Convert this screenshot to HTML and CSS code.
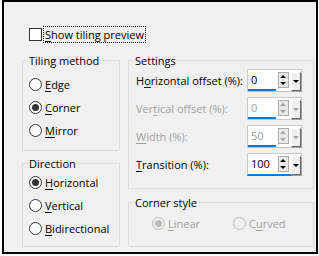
FILE: index.html
```html
<!DOCTYPE html>
<html>
<head>
<meta charset="utf-8">
<link rel="stylesheet" href="styles.css">
</head>
<body>
<div class="frame">
  <div class="check-row">
    <span class="checkbox"></span>
    <span class="focus"><u>S</u>how tiling preview</span>
  </div>
  <div class="cols">
    <div class="col left">
      <div class="group tiling">
        <span class="group-title">Tiling method</span>
        <div class="radio"><span class="circle"></span><span><u>E</u>dge</span></div>
        <div class="radio"><span class="circle on"></span><span><u>C</u>orner</span></div>
        <div class="radio"><span class="circle"></span><span><u>M</u>irror</span></div>
      </div>
      <div class="group direction">
        <span class="group-title">Direction</span>
        <div class="radio"><span class="circle on"></span><span><u>H</u>orizontal</span></div>
        <div class="radio"><span class="circle"></span><span><u>V</u>ertical</span></div>
        <div class="radio"><span class="circle"></span><span><u>B</u>idirectional</span></div>
      </div>
    </div>
    <div class="col right">
      <div class="group settings">
        <span class="group-title">Settings</span>
        <div class="row">
          <span class="lbl">H<u>o</u>rizontal offset (%):</span>
          <div class="spin"><span class="val">0</span><span class="updown"><i class="up"></i><i class="dn"></i></span><span class="drop"><i class="dn"></i></span></div>
        </div>
        <div class="row dis">
          <span class="lbl">Ver<u>t</u>ical offset (%):</span>
          <div class="spin"><span class="val">0</span><span class="updown"><i class="up"></i><i class="dn"></i></span><span class="drop"><i class="dn"></i></span></div>
        </div>
        <div class="row dis">
          <span class="lbl"><u>W</u>idth (%):</span>
          <div class="spin"><span class="val">50</span><span class="updown"><i class="up"></i><i class="dn"></i></span><span class="drop"><i class="dn"></i></span></div>
        </div>
        <div class="row">
          <span class="lbl"><u>T</u>ransition (%):</span>
          <div class="spin full"><span class="val">100</span><span class="updown"><i class="up"></i><i class="dn"></i></span><span class="drop"><i class="dn"></i></span></div>
        </div>
      </div>
      <div class="group corner">
        <span class="group-title">Corner style</span>
        <div class="radio-line">
          <div class="radio dis"><span class="circle on"></span><span><u>L</u>inear</span></div>
          <div class="radio dis"><span class="circle"></span><span>C<u>u</u>rved</span></div>
        </div>
      </div>
    </div>
  </div>
</div>
</body>
</html>
```
FILE: styles.css
```css
html, body {
  margin: 0;
  padding: 0;
  background: #fff;
}
body {
  font-family: "Open Sans", "Noto Sans", sans-serif;
  font-size: 11px;
  color: #000;
}
u { text-decoration: underline; text-underline-offset: 2px; }
.frame {
  margin: 0 1px 0 2px;
  width: 294px;
  height: 250px;
  background: #f0f0f0;
  border: 2px solid #000;
  padding: 0 0 0 18px;
  box-sizing: content-box;
}
.check-row {
  display: flex;
  align-items: center;
  height: 15px;
  margin-top: 25px;
  padding-left: 7px;
}
.checkbox {
  width: 11px;
  height: 11px;
  border: 1px solid #333;
  background: #fff;
  margin-right: 2px;
}
.focus {
  outline: 1px dotted #000;
  padding: 0 1px;
  line-height: 15px;
}
.cols {
  display: flex;
  gap: 8px;
  margin-top: 18px;
}
.col { display: flex; flex-direction: column; }
.left { width: 98px; gap: 12px; }
.right { width: 186px; gap: 13px; }
.group {
  position: relative;
  border: 1px solid #dcdcdc;
  box-sizing: border-box;
}
.group-title {
  position: absolute;
  top: -8px;
  left: 5px;
  padding: 0 1px;
  line-height: 15px;
  background: #f0f0f0;
}
.tiling { height: 91px; padding: 12px 0 0 6px; }
.direction { height: 84px; padding: 7px 0 0 6px; }
.settings { height: 129px; padding: 5px 0 0 7px; }
.corner { height: 45px; padding: 9px 0 0 23px; }
.radio {
  display: flex;
  align-items: center;
  height: 23px;
}
.circle {
  width: 11px;
  height: 11px;
  border: 1px solid #333;
  border-radius: 50%;
  background: #fff;
  margin-right: 3px;
  display: flex;
  align-items: center;
  justify-content: center;
}
.circle.on::after {
  content: "";
  width: 7px;
  height: 7px;
  border-radius: 50%;
  background: #333;
}
.radio.dis { color: #a0a0a0; }
.radio.dis .circle { border-color: #bcbcbc; background: #f0f0f0; }
.radio.dis .circle.on::after { background: #bcbcbc; }
.radio-line { display: flex; gap: 0; }
.radio-line .radio:first-child { width: 81px; }
.row {
  display: flex;
  align-items: center;
  height: 28px;
}
.row .lbl { width: 111px; }
.row.dis .lbl { color: #a0a0a0; }
.spin {
  display: flex;
  align-items: flex-start;
  width: 53px;
  height: 21px;
  border: 1px solid #c8c8c8;
  background: #fff;
  position: relative;
}
.val {
  width: 27px;
  height: 19px;
  padding-left: 3px;
  line-height: 19px;
  border-bottom: 2px solid #0078d7;
}
.row.dis .val { color: #a0a0a0; }
.spin.full { border-bottom: 2px solid #0078d7; height: 20px; }
.spin.full .val { border-bottom: 0; height: 20px; }
.updown {
  margin: 2px 0 0 2px;
  width: 9px;
  height: 14px;
  border: 1px solid #adadad;
  background: #e8e8e8;
  display: flex;
  flex-direction: column;
  align-items: center;
  justify-content: space-around;
}
.drop {
  margin: 2px 0 0 2px;
  width: 9px;
  height: 17px;
  border-top: 1px solid #fff;
  border-left: 1px solid #fff;
  border-right: 1px solid #696969;
  border-bottom: 1px solid #696969;
  background: #f0f0f0;
  display: flex;
  align-items: center;
  justify-content: center;
  box-shadow: 1px 1px 0 #a0a0a0;
}
.up, .dn { display: block; width: 0; height: 0; border-left: 3px solid transparent; border-right: 3px solid transparent; }
.up { border-bottom: 3px solid #000; }
.dn { border-top: 3px solid #000; }
.row.dis .up { border-bottom-color: #a0a0a0; }
.row.dis .dn { border-top-color: #a0a0a0; }
```
